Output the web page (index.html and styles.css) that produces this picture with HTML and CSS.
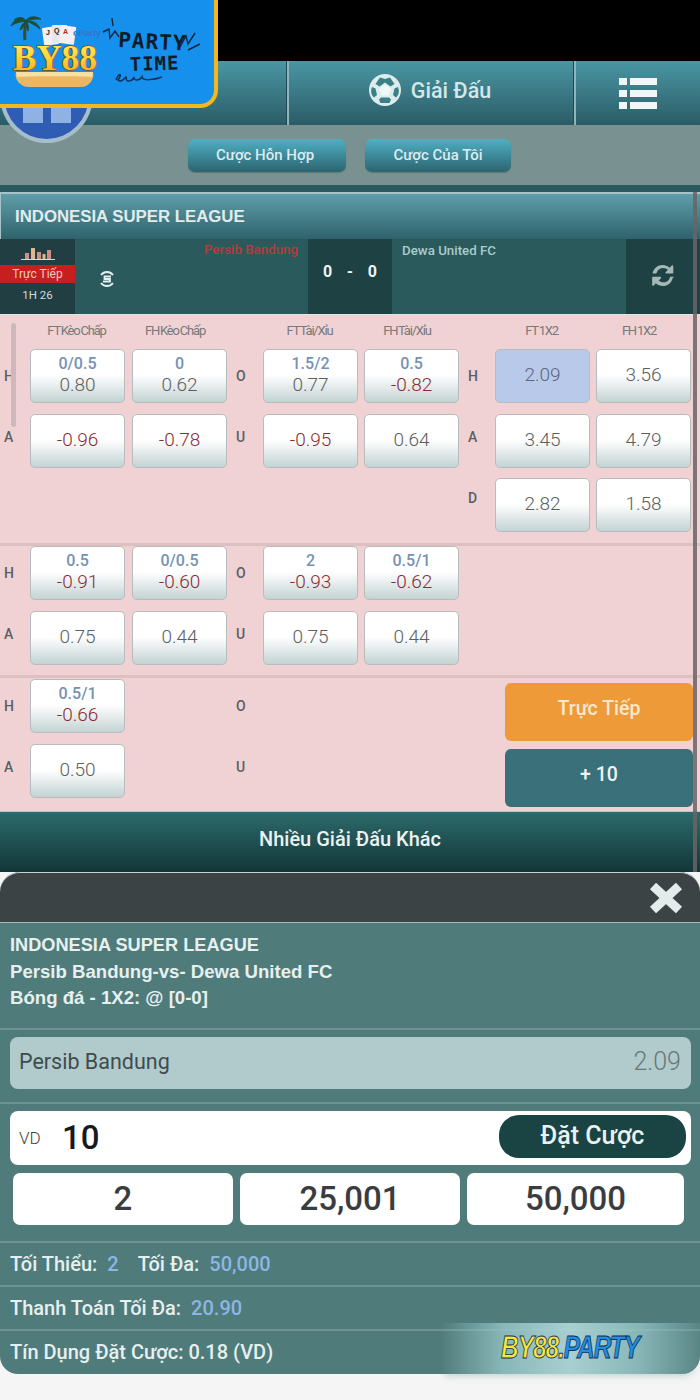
FILE: index.html
```html
<!DOCTYPE html>
<html lang="vi">
<head>
<meta charset="utf-8">
<title>Indonesia Super League</title>
<link rel="stylesheet" href="styles.css">
</head>
<body>
<div class="page">
  <div class="topblack"></div>
  <nav class="nav">
    <div class="nav-cell nav-first"></div>
    <div class="nav-cell nav-mid">
      <svg class="ball" viewBox="0 0 36 34" aria-hidden="true">
        <circle cx="18" cy="17" r="16" fill="#dcecec"/>
        <path d="M13 4.500l5 1.500v3.500l-5.500 4-4-2.500z" fill="#3c7f88"/>
        <path d="M23 4.500l-5 1.500v3.500l5.500 4 4-2.500z" fill="#3c7f88"/>
        <path d="M5 14l3.500 1.500 1.500 6.500-3 2.500C4 22 3.500 18 5 14z" fill="#3c7f88"/>
        <path d="M31 14l-3.500 1.500-1.500 6.500 3 2.500c3-2.500 3.500-6.500 2-10.500z" fill="#3c7f88"/>
        <path d="M12 26.500l2-2h8l2 2-1.500 3.500h-9z" fill="#3c7f88"/>
        <path d="M18 11.500l6 4.300-2.300 6.700h-7.400l-2.300-6.700z" fill="#f0f7f7"/>
      </svg>
      <span>Giải Đấu</span>
    </div>
    <div class="nav-cell nav-last">
      <div class="menu-icon"><i></i><b></b><i></i><b></b><i></i><b></b></div>
    </div>
  </nav>
  <div class="subbar">
    <a class="sub-btn sub-a">Cược Hỗn Hợp</a>
    <a class="sub-btn sub-b">Cược Của Tôi</a>
  </div>
  <div class="strip"></div>

  <main class="board">
    <h2 class="league">INDONESIA SUPER LEAGUE</h2>
    <div class="match">
      <div class="live">
        <svg class="bars" viewBox="0 0 36 14" aria-hidden="true">
          <rect x="5" y="6" width="4" height="6" fill="#d08f84"/><rect x="11" y="1" width="4" height="11" fill="#dcb88e"/>
          <rect x="17" y="5" width="4" height="7" fill="#d08f84"/><rect x="22.500" y="7" width="3" height="5" fill="#dcb88e"/><rect x="27" y="3" width="4" height="9" fill="#d08f84"/>
          <rect x="1" y="12" width="34" height="1" fill="#cfdede"/>
        </svg>
        <div class="live-tag">Trực Tiếp</div>
        <div class="live-time">1H 26</div>
      </div>
      <div class="team team-home">
        <svg class="sicon" viewBox="0 0 18 18" aria-hidden="true">
          <path d="M3 5c3-4 9-4 12 0M3 13c3 4 9 4 12 0" fill="none" stroke="#e4f0f0" stroke-width="2"/>
          <path d="M13 6.500H6.500V9h5.500v2.500H5" fill="none" stroke="#e4f0f0" stroke-width="1.800"/>
        </svg>
        <span class="home-name">Persib Bandung</span>
      </div>
      <div class="score"><span>0</span><span>-</span><span>0</span></div>
      <div class="team team-away">Dewa United FC</div>
      <div class="refresh">
        <svg viewBox="0 0 24 24" aria-hidden="true"><path fill="#a4b8b8" d="M20.300 14.500c-.9 4.100-4.300 7-8.500 7-2.200 0-4.300-.9-5.900-2.400l-1.800 1.800c-.2.200-.4.300-.6.300-.5 0-.8-.4-.8-.9v-6c0-.5.400-.8.800-.8h6c.5 0 .9.400.9.800 0 .2-.1.400-.3.600l-1.800 1.800c1.100 1 2.500 1.600 4 1.600 2.100 0 4.100-1.100 5.100-2.900.2-.4.500-1.200.6-1.600.1-.2.200-.3.400-.3h2.600c.2 0 .3.200.3.400zM21 10.800h-6c-.5 0-.9-.4-.9-.8 0-.2.100-.4.300-.6l1.800-1.800c-1.100-1-2.600-1.600-4.100-1.600-2.100 0-4.100 1.100-5.100 2.900-.2.400-.5 1.200-.6 1.600-.1.200-.2.300-.4.300H3.400c-.2 0-.3-.2-.3-.4C4 6.300 7.500 3.400 11.700 3.400c2.200 0 4.300.9 5.900 2.400l1.800-1.800c.2-.2.400-.3.600-.3.500 0 .8.400.8.900v6c0 .1-.4.200-.8.200z"/></svg>
      </div>
    </div>

    <div class="odds">
      <div class="grid heads">
        <span></span><span class="hd">FT Kèo Chấp</span><span class="hd hd-f">FH Kèo Chấp</span><span></span><span class="hd">FT Tài/Xỉu</span><span class="hd hd-f">FH Tài/Xỉu</span><span></span><span class="hd">FT 1X2</span><span class="hd hd-f">FH 1X2</span>
      </div>
      <section class="sec sec1">
        <div class="grid">
          <span class="lb lb-t">H</span><div class="odd"><em>0/0.5</em><span>0.80</span></div><div class="odd"><em>0</em><span>0.62</span></div>
          <span class="lb lb-t lb-m">O</span><div class="odd"><em>1.5/2</em><span>0.77</span></div><div class="odd"><em>0.5</em><span class="neg">-0.82</span></div>
          <span class="lb lb-t lb-m">H</span><div class="odd picked"><span>2.09</span></div><div class="odd"><span>3.56</span></div>

          <span class="lb lb-u">A</span><div class="odd"><span class="neg">-0.96</span></div><div class="odd"><span class="neg">-0.78</span></div>
          <span class="lb lb-u lb-m">U</span><div class="odd"><span class="neg">-0.95</span></div><div class="odd"><span>0.64</span></div>
          <span class="lb lb-u lb-m">A</span><div class="odd"><span>3.45</span></div><div class="odd"><span>4.79</span></div>

          <span></span><span></span><span></span><span></span><span></span><span></span>
          <span class="lb lb-d lb-m">D</span><div class="odd odd-up"><span>2.82</span></div><div class="odd odd-up"><span>1.58</span></div>
        </div>
      </section>
      <section class="sec sec2">
        <div class="grid">
          <span class="lb lb-t">H</span><div class="odd"><em>0.5</em><span class="neg">-0.91</span></div><div class="odd"><em>0/0.5</em><span class="neg">-0.60</span></div>
          <span class="lb lb-t lb-m">O</span><div class="odd"><em>2</em><span class="neg">-0.93</span></div><div class="odd"><em>0.5/1</em><span class="neg">-0.62</span></div>
          <span></span><span></span><span></span>
          <span class="lb lb-u">A</span><div class="odd"><span>0.75</span></div><div class="odd"><span>0.44</span></div>
          <span class="lb lb-u lb-m">U</span><div class="odd"><span>0.75</span></div><div class="odd"><span>0.44</span></div>
          <span></span><span></span><span></span>
        </div>
      </section>
      <section class="sec sec3">
        <div class="grid">
          <span class="lb lb-t">H</span><div class="odd"><em>0.5/1</em><span class="neg">-0.66</span></div><span></span>
          <span class="lb lb-t lb-m">O</span><span></span><span></span><span></span>
          <div class="side">
            <a class="side-btn side-live">Trực Tiếp</a>
            <a class="side-btn side-more">+ 10</a>
          </div>
          <span class="lb lb-u">A</span><div class="odd"><span>0.50</span></div><span></span>
          <span class="lb lb-u lb-m">U</span><span></span><span></span><span></span>
        </div>
      </section>
      <div class="scroll-left"></div>
    </div>
    <a class="more">Nhiều Giải Đấu Khác</a>
    <div class="scroll-right"></div>
  </main>

  <aside class="slip">
    <header class="slip-head">
      <svg class="close" viewBox="0 0 34 30" aria-hidden="true"><path d="M4 3l26 24M30 3L4 27" stroke="#e4ebeb" stroke-width="9" fill="none"/></svg>
    </header>
    <div class="slip-info">
      <div class="si-title">INDONESIA SUPER LEAGUE</div>
      <div>Persib Bandung-vs- Dewa United FC</div>
      <div>Bóng đá - 1X2: @ [0-0]</div>
    </div>
    <div class="slip-pick"><span>Persib Bandung</span><span class="pick-odd">2.09</span></div>
    <div class="slip-stake">
      <div class="stake">
        <span class="cur">VD</span><span class="amt">10</span>
        <a class="place">Đặt Cược</a>
      </div>
      <div class="presets"><a>2</a><a>25,001</a><a>50,000</a></div>
    </div>
    <div class="line"><span>Tối Thiểu:</span><b>2</b><span class="gap">Tối Đa:</span><b>50,000</b></div>
    <div class="line"><span>Thanh Toán Tối Đa:</span><b>20.90</b></div>
    <div class="line"><span>Tín Dụng Đặt Cược: 0.18 (VD)</span></div>
  </aside>
  <div class="foot"></div>

  <div class="mark"><span class="mark-in"><span class="mark-y">BY88.</span><span class="mark-b">PARTY</span></span></div>

  <div class="home-btn">
    <svg viewBox="0 0 50 40" aria-hidden="true"><path d="M1 0h48v30H29V14H21v16H1z" fill="#8fb2e4"/></svg>
  </div>

  <div class="promo">
    <svg viewBox="0 0 214 104" aria-hidden="true">
      <defs>
        <linearGradient id="gold" x1="0" y1="0" x2="0" y2="1">
          <stop offset="0" stop-color="#fff07a"/><stop offset=".55" stop-color="#fdd12b"/><stop offset="1" stop-color="#f39a1c"/>
        </linearGradient>
      </defs>
      <path d="M25 40c-1-8 0-14 2-20" stroke="#3b4a2a" stroke-width="3" fill="none"/>
      <path d="M26 21c-6-4-12-2-15 5 4-3 8-4 15-5zm0 0c-3-5-9-4-12-1 4-1 8-1 12 1zm0 0c2-4 8-6 15-2-6 0-10 0-15 2zm0 0c6-1 12 2 14 8-5-4-9-6-14-8zm0 0c0 4-3 7-6 9 1-4 3-7 6-9zm0 0c2 3 3 6 2 10-1-4-2-7-2-10z" fill="#1c4f36" stroke="#1c4f36"/>
      <rect x="43" y="27" width="15" height="18" rx="1" fill="#f3f0f3" transform="rotate(-8 50 36)"/>
      <rect x="52" y="25" width="15" height="18" rx="1" fill="#e9e5ef"/>
      <rect x="60" y="26" width="15" height="18" rx="1" fill="#f3f0f3" transform="rotate(8 68 36)"/>
      <text x="46" y="35" class="card-t">J</text><text x="54" y="33" class="card-t">Q</text><text x="63" y="34" class="card-r">A</text>
      <text x="73" y="36" class="oparty">oParty</text>
      <path d="M16 72h77c2 7-4 15-12 15H29c-9 0-15-8-13-15z" fill="#eab766"/>
      <path d="M16 72h77l-1 5c-20-1-58-1-75 0z" fill="#f6dfa0"/>
      <text x="13" y="70" class="by88" fill="url(#gold)" textLength="84" lengthAdjust="spacingAndGlyphs">BY88</text>
      <path d="M103 32l6-3 1 9 5-7 4 6M112 18l1 8M180 47l6-11 2 8 7-11M188 50l12-6" fill="none" stroke="#10263d" stroke-width="1.400"/>
      <text x="118" y="47" class="hand" transform="rotate(3 118 47)">PARTY</text>
      <text x="130" y="71" class="hand hand-s" transform="rotate(-2 130 71)">TIME</text>
      <path d="M116 80c3-8 7-6 2 0 4 4 9-6 8-2 0 5 7 3 8-1 0 5 6 3 8 0 0 4 12 3 20 0" fill="none" stroke="#10325a" stroke-width="1.500"/>
    </svg>
  </div>
</div>
</body>
</html>
```
FILE: styles.css
```css
* { box-sizing: border-box; }
html, body { margin: 0; padding: 0; background: #f5f5f5; }
body { font-family: Roboto, "Liberation Sans", sans-serif; }
a { display: block; }
em { font-style: normal; }
.page { position: relative; width: 700px; height: 1400px; overflow: hidden; }

.topblack { height: 61px; background: #000; }

.nav { display: flex; height: 64px; background: linear-gradient(#4a96a3, #2a5c66); }
.nav-cell { display: flex; align-items: center; justify-content: center; }
.nav-first { width: 287px; border-right: 1px solid #1d4a55; }
.nav-mid { width: 287px; gap: 8px; color: #d4e8ea; font-size: 21.500px; font-weight: 500; border-left: 2px solid #8fb5bb; border-right: 1px solid #1d4a55; padding: 0 4px 6px 0; }
.nav-last { width: 126px; border-left: 2px solid #8fb5bb; }
.ball { width: 36px; height: 34px; }
.menu-icon { display: grid; grid-template-columns: 8px 27px; gap: 5px 3px; }
.menu-icon i, .menu-icon b { height: 7px; background: #f2f6f6; display: block; }

.subbar { position: relative; height: 60px; background: #7a9191; display: flex; padding: 14px 0 0 188px; gap: 19px; }
.sub-btn { height: 33px; border-radius: 7px; background: linear-gradient(#4fb0c3, #2c6470); color: #dcecef; font-size: 15px; font-weight: 500; text-align: center; line-height: 32px; box-shadow: 0 1px 1px #5d7a7c; }
.sub-a { width: 158px; padding-right: 4px; }
.sub-b { width: 146px; }

.strip { height: 7px; background: #2a5a60; }

.board { position: relative; }
.league { margin: 0; height: 47px; padding: 0 0 2px 14px; background: linear-gradient(#5f9ea9, #2f636c); border-top: 2px solid #a7c3c8; border-left: 1px solid #a7c3c8; color: #e2eced; font: bold 16.800px/46px "Liberation Sans", Arial, sans-serif; }

.match { display: flex; height: 76px; background: #2a5a5c; border-bottom: 1px solid #dfe6e6; }
.live { width: 75px; background: #213f42; text-align: center; padding-top: 8px; }
.bars { display: block; width: 36px; height: 14px; margin: 0 auto 4px; }
.live-tag { height: 18px; background: #c5201f; color: #f1c9c1; font-size: 12px; line-height: 18px; }
.live-time { color: #cfdcdc; font-size: 11.500px; line-height: 16px; margin-top: 4px; }
.team { color: #a9cccc; font-size: 13.300px; font-weight: 500; padding-top: 4px; }
.team-home { position: relative; width: 233px; }
.home-name { position: absolute; top: 3px; right: 10px; color: #b83a3c; }
.sicon { position: absolute; left: 23px; top: 31px; width: 18px; height: 18px; }
.score { width: 84px; background: #1e4143; color: #eef3f3; font-size: 16px; font-weight: 700; display: flex; justify-content: space-between; padding: 23px 15px 0; line-height: 20px; }
.team-away { width: 234px; padding-left: 10px; }
.refresh { width: 74px; background: #1e4143; display: flex; align-items: center; justify-content: center; padding-bottom: 3px; }
.refresh svg { width: 28px; height: 28px; }

.odds { position: relative; height: 496px; background: #f0d2d4; }
.grid { display: grid; grid-template-columns: 30px 102px 95px 36px 101px 95px 36px 101px 95px; grid-auto-rows: 54px; row-gap: 11px; }
.heads { grid-auto-rows: 34px; }
.hd { width: 95px; text-align: center; color: #77797b; font-size: 13px; letter-spacing: -1.200px; word-spacing: -1px; line-height: 32px; padding-right: 2px; }
.hd-f { padding-right: 9px; }
.lb { font-size: 14px; font-weight: 500; color: #5b5f62; padding-left: 4px; }
.lb-t { line-height: 55px; }
.lb-u { line-height: 47px; }
.lb-m { padding-left: 9px; }
.lb-d { line-height: 38px; }
.odd { width: 95px; height: 54px; border: 1px solid #b9bcbc; border-radius: 5px; background: linear-gradient(#fff 0%, #fff 48%, #c3d3d3 100%); display: flex; flex-direction: column; align-items: center; justify-content: center; color: #5c5e60; font-size: 19px; font-weight: 300; line-height: 21px; padding-bottom: 4px; }
.odd-up { margin-top: -1px; }
.odd em { color: #7592b4; font-size: 16px; font-weight: 500; line-height: 21px; }
.neg { color: #8d2a30; }
.picked { background: #b9c9ea; color: #5c6580; }

.sec { border-top: 3px solid #ddc0c1; }
.sec1 { height: 194px; border-top: 0; }
.sec2 { height: 132px; }
.sec3 { height: 136px; padding-top: 1px; }

.side { grid-column: 8 / 10; grid-row: 1 / 3; width: 188px; margin: 4px 0 0 10px; display: flex; flex-direction: column; gap: 8px; }
.side-btn { flex: none; height: 58px; border-radius: 6px; text-align: center; font-size: 19.500px; font-weight: 500; line-height: 52px; }
.side-live { background: #ef9a38; color: #f9e9cf; }
.side-more { background: #39707a; color: #eef4f4; }

.scroll-left { position: absolute; left: 11px; top: 8px; width: 5px; height: 104px; background: #cdb9bc; border-radius: 3px; }
.scroll-right { position: absolute; right: 3px; top: 0; width: 4px; height: 680px; background: #6a6466; opacity: .85; }

.more { height: 61px; background: linear-gradient(#2d6a6b, #123638); color: #eaf2f2; font-size: 20px; font-weight: 500; text-align: center; line-height: 55px; border-top: 1px solid #b9c9c9; }

.slip { background: #507b7b; height: 502px; border-radius: 20px 20px 18px 18px; color: #e6f0ef; position: relative; z-index: 1; }
.slip-head { display: flex; justify-content: flex-end; align-items: center; height: 51px; background: #3b4344; border-radius: 20px 20px 0 0; border-top: 1px solid #c5d2d0; border-bottom: 1px solid #a8bcba; padding: 0 17px 0 0; }
.close { width: 34px; height: 30px; }
.slip-info { height: 107px; padding: 9px 10px 0; font: bold 18.600px/26.500px "Liberation Sans", Arial, sans-serif; border-bottom: 2px solid #6d9393; }
.si-title { font-size: 18.200px; }
.slip-pick { display: flex; justify-content: space-between; align-items: center; height: 52px; margin: 7px 9px 14px 10px; padding: 0 10px 4px 9px; background: #b1cbcc; border-radius: 8px; color: #3f4c4e; font-size: 21.500px; position: relative; }
.slip-pick::after { content: ""; position: absolute; left: -10px; right: -9px; bottom: -15px; height: 2px; background: #6d9393; }
.pick-odd { color: #66797b; font-size: 25px; font-weight: 300; }
.slip-stake { padding: 8px 9px 18px 10px; border-bottom: 2px solid #6d9393; height: 140px; }
.stake { display: flex; align-items: center; height: 54px; background: #fff; border-radius: 8px; padding: 0 5px 0 9px; }
.cur { color: #3d4446; font-size: 17px; font-weight: 300; width: 43px; }
.amt { color: #161a1c; font-size: 33px; font-weight: 500; flex: 1; margin-bottom: 2px; }
.place { width: 187px; height: 43px; margin-bottom: 4px; border-radius: 20px; background: #1a4343; color: #e9f1f1; font-size: 25px; font-weight: 500; text-align: center; line-height: 42px; }
.presets { display: grid; grid-template-columns: 220px 220px 217px; gap: 7px; margin: 8px 0 0 3px; }
.presets a { height: 52px; background: #fff; border-radius: 7px; text-align: center; color: #3a3d3f; font-size: 33px; font-weight: 500; line-height: 52px; }
.line { display: flex; align-items: center; gap: 10px; height: 44px; padding: 0 10px; font-size: 20px; font-weight: 500; border-bottom: 2px solid #6d9393; }
.line:last-child { border-bottom: 0; padding-bottom: 2px; }
.line b { color: #8db6e4; font-weight: 500; }
.gap { margin-left: 9px; }

.foot { height: 26px; background: #f5f5f5; }

.mark { position: absolute; z-index: 2; left: 440px; top: 1323px; width: 260px; height: 51px; border-radius: 0 0 18px 0; background: linear-gradient(90deg, rgba(160,205,208,0) 0%, rgba(150,198,200,.8) 24%, rgba(178,216,218,.9) 50%, rgba(150,198,200,.8) 76%, rgba(120,165,166,.25) 100%); box-shadow: 0 7px 7px -5px rgba(110,140,140,.35); text-align: center; font: italic bold 24.500px/50px "Liberation Sans", Arial, sans-serif; -webkit-text-stroke: .7px #14314f; }
.mark-in { display: inline-block; transform: scaleY(1.25); letter-spacing: -1.100px; }
.mark-y { color: #fbe63a; }
.mark-b { color: #1f8ee6; }

.home-btn { position: absolute; z-index: 2; left: 0; top: 48px; width: 93px; height: 95px; border-radius: 50%; background: #2f5db4; border: 4px solid #a6bdcb; display: flex; align-items: flex-end; justify-content: center; padding-bottom: 6px; }
.home-btn svg { width: 50px; height: 40px; }

.promo { position: absolute; z-index: 3; left: 0; top: 0; width: 218px; height: 108px; background: #1590ec; border-right: 4px solid #f5b81c; border-bottom: 4px solid #f5b81c; border-radius: 0 0 18px 0; }
.promo svg { display: block; width: 214px; height: 104px; }
.card-t { font: bold 7px "Liberation Sans", Arial, sans-serif; fill: #222; }
.card-r { font: bold 7px "Liberation Sans", Arial, sans-serif; fill: #c2222a; }
.oparty { font: bold 9px "Liberation Sans", Arial, sans-serif; fill: #3a74c7; }
.by88 { font: bold 36px "Liberation Serif", serif; stroke: #8a4a08; stroke-width: 1.400px; paint-order: stroke; }
.hand { font: bold 21px "DejaVu Sans Mono", monospace; fill: #0e1b2c; letter-spacing: 1px; }
.hand-s { font-size: 19px; }
```
